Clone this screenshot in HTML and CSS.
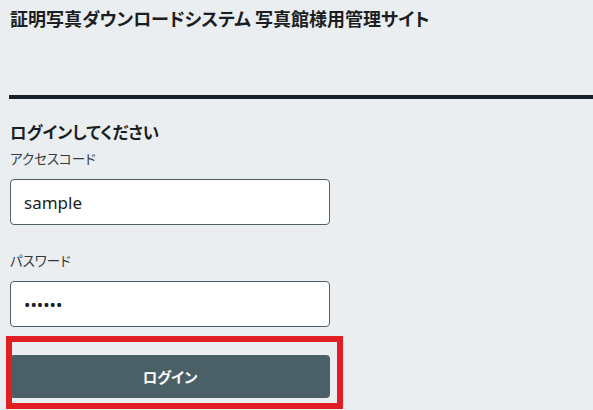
FILE: index.html
```html
<!DOCTYPE html>
<html lang="ja">
<head>
<meta charset="utf-8">
<title>証明写真ダウンロードシステム 写真館様用管理サイト</title>
<link rel="stylesheet" href="styles.css">
</head>
<body>
<div class="page">
  <header class="site-header">
    <h1 class="site-title">証明写真ダウンロードシステム 写真館様用管理サイト</h1>
  </header>
  <div class="rule"></div>
  <form class="login">
    <h2 class="login-title">ログインしてください</h2>
    <label class="field-label" for="code">アクセスコード</label>
    <input class="field-input" id="code" type="text" value="sample">
    <label class="field-label field-label-2" for="pw">パスワード</label>
    <input class="field-input" id="pw" type="password" value="sample">
    <div class="button-wrap">
      <button class="login-button" type="button">ログイン</button>
      <div class="highlight"></div>
    </div>
  </form>
</div>
</body>
</html>
```

FILE: styles.css
```css
html, body {
  margin: 0;
  padding: 0;
}
html {
  background: #ebeef0;
}
body {
  color: #1b1f22;
  font-family: "Noto Sans", "Noto Sans CJK JP", sans-serif;
}
.page {
  padding: 5px 0 14px 10px;
}
.site-title {
  margin: 0;
  font-family: "Noto Sans CJK JP", sans-serif;
  font-size: 18px;
  font-weight: 700;
  line-height: 27px;
  font-feature-settings: "palt";
  color: #1b1f22;
}
.rule {
  height: 4px;
  margin: 63px 0 0 -1px;
  background: #13222a;
}
.login {
  display: flex;
  flex-direction: column;
  width: 320px;
}
.login-title {
  margin: 21px 0 0;
  font-family: "Noto Sans CJK JP", sans-serif;
  font-size: 16.5px;
  font-weight: 700;
  line-height: 24px;
  font-feature-settings: "palt";
  color: #1b1f22;
}
.field-label {
  margin-top: 4px;
  font-family: "Noto Sans CJK JP", sans-serif;
  font-size: 13.5px;
  line-height: 20px;
  font-feature-settings: "palt";
  color: #333a3e;
}
.field-label-2 {
  margin-top: 25px;
}
.field-input {
  box-sizing: border-box;
  margin: 11px 0 0;
  width: 320px;
  height: 46px;
  padding: 0 13px;
  border: 1px solid #4f6167;
  border-radius: 4px;
  background: #ffffff;
  font-family: "Noto Sans", sans-serif;
  font-size: 17px;
  color: #1b1f22;
  outline: none;
}
.button-wrap {
  position: relative;
  margin-top: 28px;
}
.login-button {
  display: block;
  box-sizing: border-box;
  width: 320px;
  height: 43px;
  border: 0;
  border-radius: 4px;
  background: #4b6066;
  color: #ffffff;
  font-family: "Noto Sans CJK JP", sans-serif;
  font-size: 14.5px;
  font-weight: 700;
  font-feature-settings: "palt";
  cursor: pointer;
}
.highlight {
  position: absolute;
  left: -4px;
  top: -19px;
  width: 337px;
  height: 73px;
  box-sizing: border-box;
  border: 6px solid #e21e25;
  pointer-events: none;
}
```
